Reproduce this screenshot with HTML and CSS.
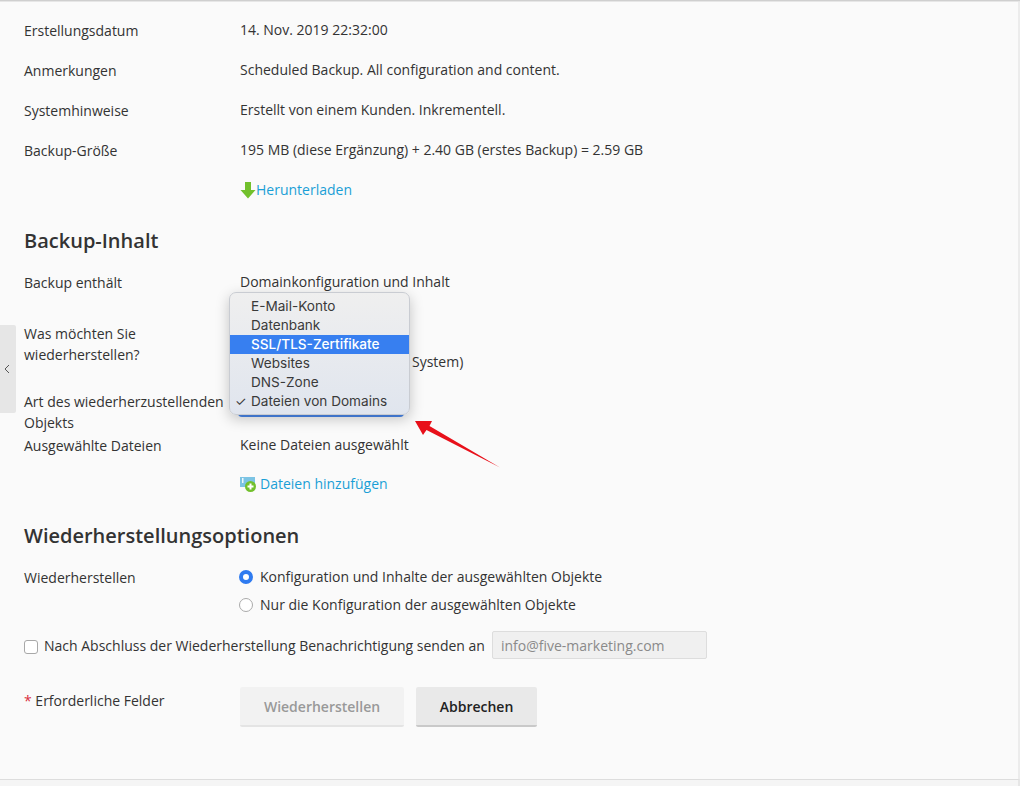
FILE: index.html
```html
<!DOCTYPE html>
<html lang="de">
<head>
<meta charset="utf-8">
<title>Backup</title>
<link rel="stylesheet" href="styles.css">
</head>
<body>
<div class="page">
  <div class="row r40"><div class="label">Erstellungsdatum</div><div class="value">14. Nov. 2019 22:32:00</div></div>
  <div class="row r40"><div class="label">Anmerkungen</div><div class="value">Scheduled Backup. All configuration and content.</div></div>
  <div class="row r40"><div class="label">Systemhinweise</div><div class="value">Erstellt von einem Kunden. Inkrementell.</div></div>
  <div class="row r40"><div class="label">Backup-Größe</div><div class="value">195 MB (diese Ergänzung) + 2.40 GB (erstes Backup) = 2.59 GB</div></div>
  <div class="row r40"><div class="label"></div><div class="value"><a class="link dl" href="#"><svg class="ico-dl" width="16" height="17" viewBox="0 0 16 17"><path d="M5 0h6v8h4.500l-7.500 8.500L.5 8H5z" fill="#72c02c"/></svg>Herunterladen</a></div></div>

  <h2 class="head h-one">Backup-Inhalt</h2>
  <div class="row r-contains"><div class="label">Backup enthält</div><div class="value">Domainkonfiguration und Inhalt</div></div>
  <div class="row r-what"><div class="label">Was möchten Sie<br>wiederherstellen?</div><div class="value"><span class="sys">System)</span></div></div>
  <div class="row r-type"><div class="label">Art des wiederherzustellenden Objekts</div><div class="value"></div></div>
  <div class="row r-files"><div class="label">Ausgewählte Dateien</div><div class="value">Keine Dateien ausgewählt</div></div>
  <div class="row r-add"><div class="label"></div><div class="value"><a class="link add" href="#"><svg width="16" height="16" viewBox="0 0 16 16"><rect x="0" y="1" width="15" height="10" fill="#7cc4e4"/><rect x="2" y="2" width="1.500" height="5" fill="#eef8fc"/><circle cx="10.500" cy="10.500" r="5.500" fill="#72c02c"/><path d="M10.500 7.500v6M7.500 10.500h6" stroke="#fff" stroke-width="2"/></svg>Dateien hinzufügen</a></div></div>

  <h2 class="head h-two">Wiederherstellungsoptionen</h2>
  <div class="row r-opt1"><div class="label">Wiederherstellen</div><div class="value radio-line"><span class="radio on"></span>Konfiguration und Inhalte der ausgewählten Objekte</div></div>
  <div class="row r-opt2"><div class="label"></div><div class="value radio-line"><span class="radio"></span>Nur die Konfiguration der ausgewählten Objekte</div></div>
  <div class="notify"><span class="check"></span><span>Nach Abschluss der Wiederherstellung Benachrichtigung senden an</span><span class="field">info@five-marketing.com</span></div>
  <div class="row actions"><div class="label"><span class="req">*</span> Erforderliche Felder</div><div class="buttons"><button class="btn off">Wiederherstellen</button><button class="btn">Abbrechen</button></div></div>
  <div class="foot"></div>

  <div class="side"><svg width="6" height="10" viewBox="0 0 6 10"><path d="M5 1 1 5l4 4" fill="none" stroke="#555" stroke-width="1"/></svg></div>

  <div class="select-edge"></div>
  <ul class="menu">
    <li>E-Mail-Konto</li>
    <li>Datenbank</li>
    <li class="hot">SSL/TLS-Zertifikate</li>
    <li>Websites</li>
    <li>DNS-Zone</li>
    <li class="picked">Dateien von Domains</li>
  </ul>
  <svg class="arrow" width="90" height="52" viewBox="0 0 90 52"><path d="M0 1 17 1 14.500 6 85 47.500 11.500 10 8 15z" fill="#e8101a"/></svg>
</div>
</body>
</html>
```
FILE: styles.css
```css
* { box-sizing: border-box; }
html, body { margin: 0; height: 100%; }
body {
  background: #fafafa;
  font-family: "Open Sans", sans-serif;
  font-size: 14px;
  line-height: 20px;
  color: #333;
  overflow: hidden;
}
.page {
  position: relative;
  height: 786px;
  padding: 20px 0 0 24px;
  box-shadow: inset 0 1px 0 #cfcfcf, inset 0 2px 0 #e6e6e6, inset -2px 0 0 #ececec;
}
.row { display: flex; }
.r40 { height: 40px; }
.label { width: 216px; flex: none; padding-top: 1px; padding-right: 10px; }
.value { flex: 1; }
.link { color: #1a9fd6; text-decoration: none; display: inline-flex; align-items: center; }
.ico-dl { margin-top: 1px; }
.head { margin: 0; font-size: 20px; line-height: 28px; font-weight: 600; color: #333; }
.h-one { margin-top: 7px; }
.r-contains { margin-top: 17px; height: 51px; }
.r-what { height: 67px; }
.r-what .label { padding-top: 0; line-height: 21px; }
.sys { display: block; margin: 29px 0 0 172px; }
.r-type { height: 45px; }
.r-type .label { padding-right: 0; line-height: 21px; }
.r-files { height: 39px; }
.r-add { height: 30px; }
.add svg { margin-right: 4px; }
.h-two { margin-top: 18px; }
.r-opt1 { margin-top: 17px; height: 28px; }
.r-opt2 { height: 28px; }
.radio-line { display: flex; align-items: flex-start; }
.radio {
  width: 14px; height: 14px; border-radius: 50%; flex: none;
  border: 1px solid #aaa; background: #fff; margin: 3px 7px 0 -1px;
}
.radio.on { border: 4.500px solid #2f7bf0; }
.notify { display: flex; align-items: center; margin-top: 9px; height: 28px; }
.check {
  width: 14px; height: 14px; border: 1px solid #a8a8a8; border-radius: 3px;
  background: #fff; margin: 2px 6px 0 0;
}
.field {
  margin: -1px 0 0 7px; align-self: flex-start; width: 215px; height: 28px; padding: 0 8px; line-height: 28px;
  background: #f0f0f0; border: 1px solid #ddd; border-radius: 2px; color: #8a8a8a;
}
.actions { margin-top: 27px; }
.actions .label { padding-top: 4px; }
.req { color: #d9303e; }
.buttons { display: flex; gap: 12px; }
.btn {
  height: 40px; padding: 2px 0 0; border: 0; border-bottom: 2px solid #c9c9c9; border-radius: 2px;
  background: #e9e9e9; font: 600 14px/20px "Open Sans", sans-serif; color: #222;
}
.btn.off { width: 164px; background: #f2f2f2; color: #999; border-bottom-color: #e4e4e4; }
.btn:not(.off) { width: 121px; }
.foot {
  position: absolute; left: 0; right: 0; top: 779px; height: 7px;
  border-top: 1px solid #ddd; border-right: 2px solid #e6e6e6; background: #f5f5f5;
}
.side {
  position: absolute; left: 0; top: 325px; width: 16px; height: 88px;
  background: #e6e6e6; border-radius: 0 2px 2px 0;
  display: flex; align-items: center; justify-content: flex-start; padding-left: 4px;
}
.select-edge {
  position: absolute; left: 238px; top: 408px; width: 166px; height: 9px;
  background: #4a88ec; border-radius: 0 0 4px 4px;
  z-index: 2;
}
.menu {
  position: absolute; left: 229px; top: 292px; width: 181px; height: 123px;
  margin: 0; padding: 4px 0 0; list-style: none;
  background: linear-gradient(#efefef, #e0e5ee);
  border: 1px solid #c9ccd2; border-radius: 7px;
  box-shadow: 0 4px 14px rgba(0,0,0,.22);
  font-family: "Inter", sans-serif; line-height: 19px; color: #3a3a3a;
  font-size: 13.6px;
  z-index: 3;
}
.menu li { height: 19px; padding-left: 21px; position: relative; }
.menu .hot { background: #377ff0; color: #fff; font-weight: 500; }
.picked::before { content: "✓"; position: absolute; left: 5px; top: 0; font-size: 13px; }
.arrow { position: absolute; left: 415px; top: 420px; }
```
